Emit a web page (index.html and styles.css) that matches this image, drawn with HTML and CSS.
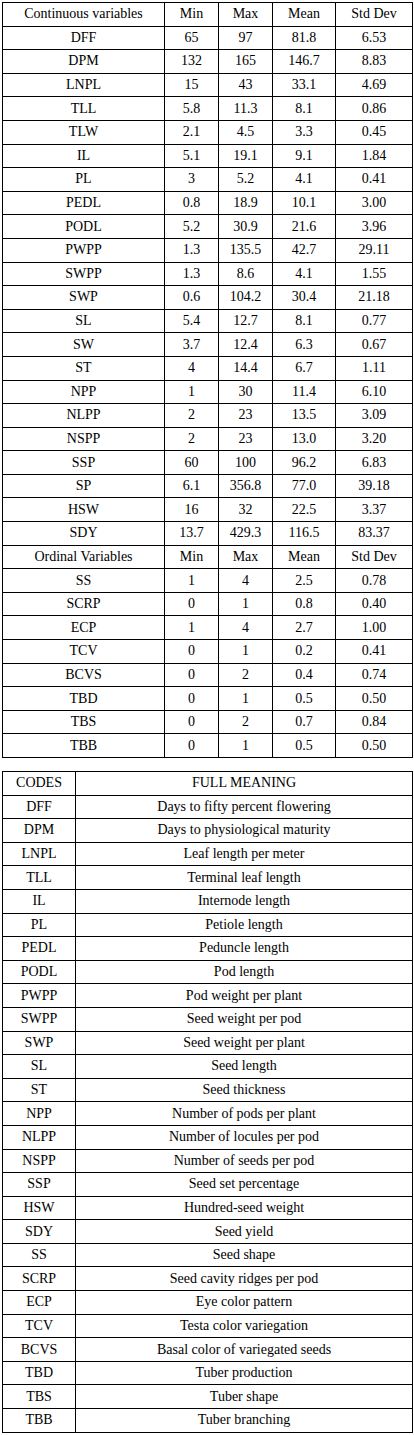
FILE: index.html
```html
<!DOCTYPE html>
<html>
<head>
<meta charset="utf-8">
<link rel="stylesheet" href="styles.css">
</head>
<body>
<table class="stats">
<colgroup><col class="c-name"><col class="c-min"><col class="c-max"><col class="c-mean"><col class="c-sd"></colgroup>
<tr><td>Continuous variables</td><td>Min</td><td>Max</td><td>Mean</td><td>Std Dev</td></tr>
<tr><td>DFF</td><td>65</td><td>97</td><td>81.8</td><td>6.53</td></tr>
<tr><td>DPM</td><td>132</td><td>165</td><td>146.7</td><td>8.83</td></tr>
<tr><td>LNPL</td><td>15</td><td>43</td><td>33.1</td><td>4.69</td></tr>
<tr><td>TLL</td><td>5.8</td><td>11.3</td><td>8.1</td><td>0.86</td></tr>
<tr><td>TLW</td><td>2.1</td><td>4.5</td><td>3.3</td><td>0.45</td></tr>
<tr><td>IL</td><td>5.1</td><td>19.1</td><td>9.1</td><td>1.84</td></tr>
<tr><td>PL</td><td>3</td><td>5.2</td><td>4.1</td><td>0.41</td></tr>
<tr><td>PEDL</td><td>0.8</td><td>18.9</td><td>10.1</td><td>3.00</td></tr>
<tr><td>PODL</td><td>5.2</td><td>30.9</td><td>21.6</td><td>3.96</td></tr>
<tr><td>PWPP</td><td>1.3</td><td>135.5</td><td>42.7</td><td>29.11</td></tr>
<tr><td>SWPP</td><td>1.3</td><td>8.6</td><td>4.1</td><td>1.55</td></tr>
<tr><td>SWP</td><td>0.6</td><td>104.2</td><td>30.4</td><td>21.18</td></tr>
<tr><td>SL</td><td>5.4</td><td>12.7</td><td>8.1</td><td>0.77</td></tr>
<tr><td>SW</td><td>3.7</td><td>12.4</td><td>6.3</td><td>0.67</td></tr>
<tr><td>ST</td><td>4</td><td>14.4</td><td>6.7</td><td>1.11</td></tr>
<tr><td>NPP</td><td>1</td><td>30</td><td>11.4</td><td>6.10</td></tr>
<tr><td>NLPP</td><td>2</td><td>23</td><td>13.5</td><td>3.09</td></tr>
<tr><td>NSPP</td><td>2</td><td>23</td><td>13.0</td><td>3.20</td></tr>
<tr><td>SSP</td><td>60</td><td>100</td><td>96.2</td><td>6.83</td></tr>
<tr><td>SP</td><td>6.1</td><td>356.8</td><td>77.0</td><td>39.18</td></tr>
<tr><td>HSW</td><td>16</td><td>32</td><td>22.5</td><td>3.37</td></tr>
<tr><td>SDY</td><td>13.7</td><td>429.3</td><td>116.5</td><td>83.37</td></tr>
<tr><td>Ordinal Variables</td><td>Min</td><td>Max</td><td>Mean</td><td>Std Dev</td></tr>
<tr><td>SS</td><td>1</td><td>4</td><td>2.5</td><td>0.78</td></tr>
<tr><td>SCRP</td><td>0</td><td>1</td><td>0.8</td><td>0.40</td></tr>
<tr><td>ECP</td><td>1</td><td>4</td><td>2.7</td><td>1.00</td></tr>
<tr><td>TCV</td><td>0</td><td>1</td><td>0.2</td><td>0.41</td></tr>
<tr><td>BCVS</td><td>0</td><td>2</td><td>0.4</td><td>0.74</td></tr>
<tr><td>TBD</td><td>0</td><td>1</td><td>0.5</td><td>0.50</td></tr>
<tr><td>TBS</td><td>0</td><td>2</td><td>0.7</td><td>0.84</td></tr>
<tr><td>TBB</td><td>0</td><td>1</td><td>0.5</td><td>0.50</td></tr>
</table>

<table class="codes">
<colgroup><col class="c-code"><col class="c-meaning"></colgroup>
<tr><td>CODES</td><td>FULL MEANING</td></tr>
<tr><td>DFF</td><td>Days to fifty percent flowering</td></tr>
<tr><td>DPM</td><td>Days to physiological maturity</td></tr>
<tr><td>LNPL</td><td>Leaf length per meter</td></tr>
<tr><td>TLL</td><td>Terminal leaf length</td></tr>
<tr><td>IL</td><td>Internode length</td></tr>
<tr><td>PL</td><td>Petiole length</td></tr>
<tr><td>PEDL</td><td>Peduncle length</td></tr>
<tr><td>PODL</td><td>Pod length</td></tr>
<tr><td>PWPP</td><td>Pod weight per plant</td></tr>
<tr><td>SWPP</td><td>Seed weight per pod</td></tr>
<tr><td>SWP</td><td>Seed weight per plant</td></tr>
<tr><td>SL</td><td>Seed length</td></tr>
<tr><td>ST</td><td>Seed thickness</td></tr>
<tr><td>NPP</td><td>Number of pods per plant</td></tr>
<tr><td>NLPP</td><td>Number of locules per pod</td></tr>
<tr><td>NSPP</td><td>Number of seeds per pod</td></tr>
<tr><td>SSP</td><td>Seed set percentage</td></tr>
<tr><td>HSW</td><td>Hundred-seed weight</td></tr>
<tr><td>SDY</td><td>Seed yield</td></tr>
<tr><td>SS</td><td>Seed shape</td></tr>
<tr><td>SCRP</td><td>Seed cavity ridges per pod</td></tr>
<tr><td>ECP</td><td>Eye color pattern</td></tr>
<tr><td>TCV</td><td>Testa color variegation</td></tr>
<tr><td>BCVS</td><td>Basal color of variegated seeds</td></tr>
<tr><td>TBD</td><td>Tuber production</td></tr>
<tr><td>TBS</td><td>Tuber shape</td></tr>
<tr><td>TBB</td><td>Tuber branching</td></tr>
</table>
</body>
</html>
```
FILE: styles.css
```css
html, body {
  margin: 0;
  padding: 0;
  background: #fff;
}
body {
  padding: 2px;
  font-family: "Liberation Serif", "Times New Roman", serif;
  font-size: 14px;
  color: #000;
}
table {
  border-collapse: collapse;
  width: 410px;
  table-layout: fixed;
}
td {
  border: 1px solid #000;
  padding: 0;
  height: 22.6px;
  text-align: center;
  vertical-align: middle;
  line-height: 16px;
}
.c-name { width: 162px; }
.c-min { width: 54px; }
.c-max { width: 54px; }
.c-mean { width: 63px; }
.c-sd { width: 77px; }
.codes { margin-top: 13px; }
.c-code { width: 73px; }
.c-meaning { width: 337px; }
```
